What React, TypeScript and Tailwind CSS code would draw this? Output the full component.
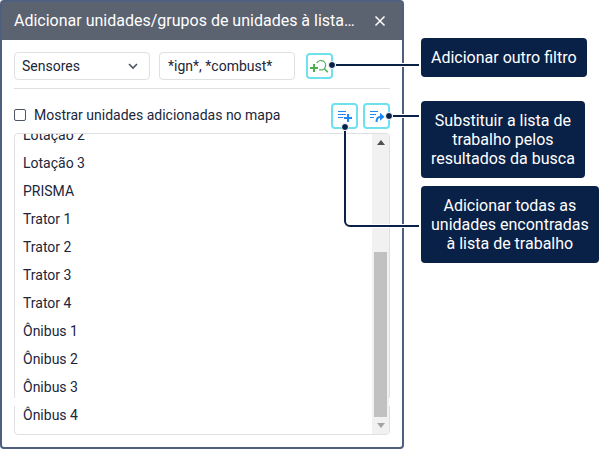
import type { ReactNode } from "react";

const units = [
  "Lotação 2",
  "Lotação 3",
  "PRISMA",
  "Trator 1",
  "Trator 2",
  "Trator 3",
  "Trator 4",
  "Ônibus 1",
  "Ônibus 2",
  "Ônibus 3",
  "Ônibus 4",
];

interface IconButtonProps {
  label: string;
  children: ReactNode;
}

function IconButton({ label, children }: IconButtonProps) {
  return (
    <button
      type="button"
      aria-label={label}
      className="flex h-[26px] w-[27px] shrink-0 items-center justify-center rounded border-2 border-[#6fe0ee] bg-white"
    >
      {children}
    </button>
  );
}

function AddFilterIcon() {
  return (
    <svg width="21" height="16" viewBox="0 0 21 16" fill="none" stroke="#4caf50">
      <path d="M1 10h8M5 6v8" strokeWidth="2" />
      <path d="M7.8 5A4.700 4.700 0 1 1 10.200 11.600" strokeWidth="1.200" />
      <path d="M15.600 11l3.200 3.200" strokeWidth="1.600" />
    </svg>
  );
}

function AddAllIcon() {
  return (
    <svg width="17" height="14" viewBox="0 0 17 14" fill="none" stroke="#1e88f7">
      <path d="M2 2.500h8M2 5.500h8M2 8.500h5" strokeWidth="1" />
      <path d="M8 9h8M12 5v8" strokeWidth="2" />
    </svg>
  );
}

function ReplaceIcon() {
  return (
    <svg width="17" height="14" viewBox="0 0 17 14" fill="none" stroke="#1e88f7">
      <path d="M2 2.500h8M2 5.500h6M2 8.500h4" strokeWidth="1" />
      <path d="M8.500 13c0-3.500 1.500-5.200 4.500-5.200" strokeWidth="2" />
      <path d="M12 3.800l4.500 4-4.500 4z" fill="#1e88f7" stroke="none" />
    </svg>
  );
}

function Dialog() {
  return (
    <section className="min-w-0 flex-1 rounded border-2 border-[#4e5f80] bg-white pb-3">
      <header className="flex h-[38px] items-center justify-between bg-[#5b6270] pr-4 pl-3 text-white">
        <h1 className="truncate text-base">
          Adicionar unidades/grupos de unidades à lista…
        </h1>
        <button type="button" aria-label="Fechar" className="shrink-0">
          <svg width="12" height="12" viewBox="0 0 12 12" fill="none" stroke="currentColor" strokeWidth="1.500">
            <path d="M1.500 1.500l9 9M10.500 1.500l-9 9" />
          </svg>
        </button>
      </header>

      <div className="px-3 pt-3">
        {/* Filter */}
        <div className="flex items-center border-b border-[#dfe0e2] pb-2">
          <div className="relative mr-[9px] min-w-0 flex-1">
            <select
              aria-label="Tipo de filtro"
              className="block h-7 w-full appearance-none rounded border border-[#dfe0e2] bg-white px-[7px] text-sm"
            >
              <option>Sensores</option>
            </select>
            <svg
              className="pointer-events-none absolute top-2.5 right-3"
              width="10"
              height="8"
              viewBox="0 0 10 8"
              fill="none"
              stroke="#4b5563"
              strokeWidth="1.600"
            >
              <path d="M1 2l4 4 4-4" />
            </svg>
          </div>
          <div className="mr-[11px] min-w-0 flex-1">
            <input
              type="text"
              aria-label="Filtro"
              defaultValue="*ign*, *combust*"
              className="block h-7 w-full rounded border border-[#dfe0e2] px-2 text-sm"
            />
          </div>
          <div className="mr-[57px]">
            <IconButton label="Adicionar outro filtro">
              <AddFilterIcon />
            </IconButton>
          </div>
        </div>

        {/* Actions */}
        <div className="flex items-center gap-[5px] pt-[14px] pb-1">
          <label className="flex flex-1 items-center gap-2 pb-[3px] text-sm">
            <input
              type="checkbox"
              className="size-3 appearance-none rounded-xs border border-[#4b5563] bg-white checked:bg-[#4b5563]"
            />
            Mostrar unidades adicionadas no mapa
          </label>
          <IconButton label="Adicionar todas as unidades">
            <AddAllIcon />
          </IconButton>
          <IconButton label="Substituir a lista de trabalho">
            <ReplaceIcon />
          </IconButton>
        </div>

        {/* Found units */}
        <div className="relative flex h-[302px] rounded border border-[#dfe0e2]">
          <ul className="flex flex-1 flex-col justify-end overflow-hidden pb-[5px] pl-2">
            {units.map((unit) => (
              <li key={unit} className="shrink-0 text-sm leading-7">
                {unit}
              </li>
            ))}
          </ul>
          <div className="flex w-[17px] flex-col items-center justify-between rounded-r bg-[#f1f1f1] py-1.5">
            <svg width="8" height="5" viewBox="0 0 8 5" fill="#505050">
              <path d="M0 5l4-5 4 5z" />
            </svg>
            <div className="mt-auto mb-1.5 h-[165px] w-[13px] bg-[#c1c1c1]" />
            <svg width="8" height="5" viewBox="0 0 8 5" fill="#a3a3a3">
              <path d="M0 0l4 5 4-5z" />
            </svg>
          </div>
          <span className="absolute -inset-x-px bottom-7 h-2 border-x border-white" />
        </div>
      </div>
    </section>
  );
}

function Callout({ children }: { children: ReactNode }) {
  return (
    <p className="rounded bg-[#0a2147] p-[10px] text-center text-base leading-[19px] text-white">
      {children}
    </p>
  );
}

// Lines that tie each callout to its button
function Connectors() {
  const lines = ["M15 65H98", "M72 116H98", "M24 131V221a5 5 0 0 0 5 5H98"];
  const dots = [
    [11, 65],
    [68, 116],
    [24, 127],
  ];

  return (
    <svg className="absolute top-0 right-full" width="100" height="240" viewBox="0 0 100 240" fill="none">
      {lines.map((d) => (
        <g key={d}>
          <path d={d} stroke="#fff" strokeWidth="4" />
          <path d={d} stroke="#0a2147" strokeWidth="2" />
        </g>
      ))}
      {dots.map(([x, y]) => (
        <circle key={y} cx={x} cy={y} r="3.500" fill="#0a2147" stroke="#fff" strokeWidth="1" />
      ))}
    </svg>
  );
}

export default function App() {
  return (
    <main className="flex items-start gap-[17px] bg-white font-['Roboto',sans-serif] text-[#20263a]">
      <Dialog />
      <aside className="relative flex w-[180px] shrink-0 flex-col items-start pt-[38px]">
        <Connectors />
        <Callout>Adicionar outro filtro</Callout>
        <div className="mt-6 mb-2">
          <Callout>
            Substituir a lista de
            <br />
            trabalho pelos
            <br />
            resultados da busca
          </Callout>
        </div>
        <Callout>
          Adicionar todas as
          <br />
          unidades encontradas
          <br />à lista de trabalho
        </Callout>
      </aside>
    </main>
  );
}
